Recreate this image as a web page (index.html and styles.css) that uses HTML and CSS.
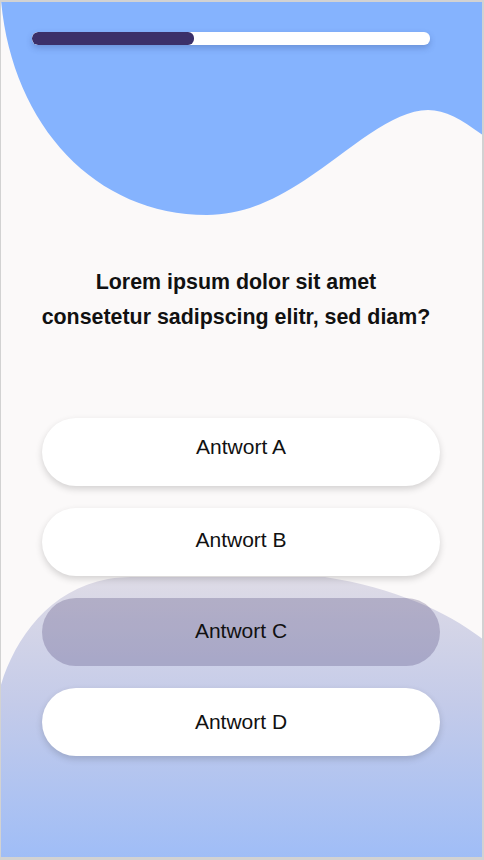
FILE: index.html
```html
<!DOCTYPE html>
<html lang="de">
<head>
<meta charset="utf-8">
<title>Quiz</title>
<link rel="stylesheet" href="styles.css">
</head>
<body>
<div class="screen">
  <svg class="bg" width="484" height="860" viewBox="0 0 484 860" aria-hidden="true">
    <defs>
      <linearGradient id="g" x1="0" y1="577" x2="0" y2="860" gradientUnits="userSpaceOnUse">
        <stop offset="0" stop-color="#dedbe6"/>
        <stop offset="0.45" stop-color="#c4cbe9"/>
        <stop offset="1" stop-color="#9fbdf7"/>
      </linearGradient>
    </defs>
    <path d="M0,0 H484 V136 C462,120 446,110 428,110 C392,110 350,150 305,180 C270,203 240,215 207,215 C95,215 12,125 1,0 Z" fill="#85b3fe"/>
    <path d="M0,688 C14,640 48,590 108,579 C116,577.5 126,577 140,577 L325,577 C395,588 448,612 484,640 V860 H0 Z" fill="url(#g)"/>
  </svg>
  <div class="content">
    <div class="progress"><div class="progress-fill" style="width:162px"></div></div>
    <h1 class="question">Lorem ipsum dolor sit amet<br>consetetur sadipscing elitr, sed diam?</h1>
    <div class="answers">
      <button class="answer answer-a">Antwort A</button>
      <button class="answer answer-b">Antwort B</button>
      <button class="answer answer-selected">Antwort C</button>
      <button class="answer">Antwort D</button>
    </div>
  </div>
</div>
</body>
</html>
```
FILE: styles.css
```css
html, body {
  margin: 0;
  padding: 0;
  background: #ffffff;
}

.screen {
  position: relative;
  width: 484px;
  height: 860px;
  box-sizing: border-box;
  border-style: solid;
  border-color: #d2d2d2;
  border-width: 2px 2px 3px 1px;
  overflow: hidden;
  background: #fbf9f9;
  font-family: "Liberation Sans", Arial, sans-serif;
}

.bg {
  position: absolute;
  left: -1px;
  top: -2px;
}

.content {
  position: relative;
  z-index: 1;
  display: flex;
  flex-direction: column;
  padding: 30px 0 0 31px;
}

.progress {
  width: 398px;
  height: 13px;
  border-radius: 6px;
  background: #ffffff;
  box-shadow: 0 3px 6px rgba(40, 60, 120, 0.28);
  overflow: hidden;
}

.progress-fill {
  height: 100%;
  background: #3b3069;
  border-radius: 6px;
}

.question {
  margin: 220px 0 0 0;
  width: 408px;
  font-size: 21.4px;
  font-weight: 700;
  line-height: 35px;
  text-align: center;
  color: #111111;
}

.answers {
  display: flex;
  flex-direction: column;
  gap: 22px;
  margin: 83px 0 0 10px;
  width: 398px;
}

.answer {
  height: 68px;
  border: none;
  border-radius: 34px;
  background: #ffffff;
  box-shadow: 0 3px 7px rgba(0, 0, 0, 0.16);
  font-family: "Liberation Sans", Arial, sans-serif;
  font-size: 21px;
  color: #111111;
  padding: 0;
  cursor: pointer;
}

.answer-a {
  padding-bottom: 10px;
}

.answer-b {
  padding-bottom: 5px;
}

.answer-selected {
  background: rgba(58, 48, 104, 0.25);
  box-shadow: none;
  padding-bottom: 2px;
}
```
